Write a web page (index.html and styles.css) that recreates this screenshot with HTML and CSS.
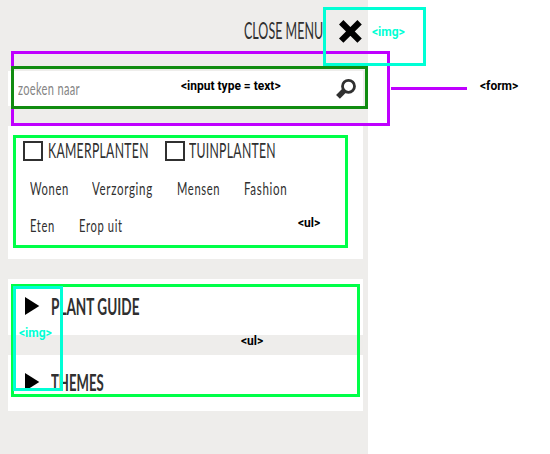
FILE: index.html
```html
<!DOCTYPE html>
<html lang="nl">
<head>
<meta charset="utf-8">
<title>Menu</title>
<link rel="stylesheet" href="styles.css">
</head>
<body>
<main class="menu">
  <header class="close"><span class="text close-text">CLOSE MENU</span>
    <svg class="cross" width="24" height="24" viewBox="0 0 24 24"><path d="M3.2 3.2 21.6 21.6M21.6 3.2 3.2 21.6" stroke="#000" stroke-width="6.2"/></svg>
  </header>
  <form class="search"><span class="text placeholder">zoeken naar</span>
    <svg class="lens" width="22" height="22" viewBox="0 0 22 22"><circle cx="12.5" cy="7.3" r="6" fill="none" stroke="#303030" stroke-width="2.8"/><path d="M8.4 11.4 2 17.8" stroke="#303030" stroke-width="5.4"/></svg>
  </form>
  <section class="card topics">
    <div class="checks">
      <i class="box"></i><span class="text check kamer">KAMERPLANTEN</span>
      <i class="box"></i><span class="text check tuin">TUINPLANTEN</span>
    </div>
    <ul class="links">
      <li class="text wonen">Wonen</li><li class="text verzorging">Verzorging</li><li class="text mensen">Mensen</li><li class="text fashion">Fashion</li>
    </ul>
    <ul class="links last">
      <li class="text eten">Eten</li><li class="text erop">Erop uit</li>
    </ul>
  </section>
  <section class="card entry">
    <svg class="arrow" width="15" height="19" viewBox="0 0 15 19"><path d="M0 0 14.3 9 0 18Z"/></svg><span class="text title guide">PLANT GUIDE</span>
  </section>
  <section class="card entry">
    <svg class="arrow" width="15" height="19" viewBox="0 0 15 19"><path d="M0 0 14.3 9 0 18Z"/></svg><span class="text title themes">THEMES</span>
  </section>
</main>
<div class="mark form-mark"></div>
<div class="mark input-mark"></div>
<div class="mark topics-mark"></div>
<div class="mark entries-mark"></div>
<div class="mark cross-mark"></div>
<div class="mark arrows-mark"></div>
<div class="connector"></div>
<span class="note cross-note">&lt;img&gt;</span>
<span class="note input-note">&lt;input type = text&gt;</span>
<span class="note form-note">&lt;form&gt;</span>
<span class="note topics-note">&lt;ul&gt;</span>
<span class="note arrows-note">&lt;img&gt;</span>
<span class="note entries-note">&lt;ul&gt;</span>
</body>
</html>
```
FILE: styles.css
```css
* { box-sizing: border-box; }
body { margin: 0; width: 550px; height: 454px; overflow: hidden; position: relative; background: #fff; }
svg { display: block; flex: none; overflow: visible; }
.menu { width: 368px; height: 454px; padding: 0 5px 0 8px; background: #eeedeb; color: #303030; font-family: Lato, sans-serif; }
.text { flex: none; white-space: nowrap; transform-origin: 0 50%; }

.close { display: flex; height: 71px; padding: 18px 0 0 236px; }
.close-text { width: 94px; font-size: 22.5px; line-height: 26px; transform: scaleX(.556); }
.cross { margin-top: 1px; }

.search { display: flex; height: 35px; margin: 0 0 20px; padding: 8px 0 0 10px; background: #fff; }
.placeholder { width: 318px; font-size: 17px; line-height: 20px; color: #858585; letter-spacing: .5px; transform: scaleX(.65); }

.card { background: #fff; }
.topics { height: 133px; margin-bottom: 20px; padding: 15px 0 0 15px; }
.checks { display: flex; height: 20px; }
.box { flex: none; width: 20px; height: 20px; border: 2px solid #303030; }
.check { font-size: 21px; line-height: 18px; margin-left: 5px; letter-spacing: .5px; transform: scaleX(.582); }
.kamer { width: 117px; }
.tuin { margin-left: 4px; }
.links { display: flex; height: 20px; margin: 18px 0 0; padding: 0 0 0 7px; list-style: none; font-size: 17.5px; line-height: 20px; letter-spacing: 1px; }
.last { margin-top: 17px; }
.links .text { transform: scaleX(.64); }
.links .verzorging, .links .fashion { transform: scaleX(.66); }
.wonen { width: 62px; }
.verzorging { width: 85px; }
.mensen { width: 67px; }
.eten { width: 49px; }

.entry { display: flex; height: 56px; padding: 18px 0 0 17px; }
.entry + .entry { margin-top: 20px; }
.title { margin-left: 11px; font-size: 23px; line-height: 19px; font-weight: 700; transform: scaleX(.59); }
.themes { transform: scaleX(.57); }

.mark { position: absolute; border: 3px solid; }
.form-mark { left: 11px; top: 51px; width: 379px; height: 75px; border-color: #bf00ff; }
.input-mark { left: 11px; top: 66px; width: 357px; height: 43px; border-color: #108c10; }
.topics-mark { left: 13px; top: 135px; width: 335px; height: 113px; border-color: #00ff48; }
.entries-mark { left: 11px; top: 284px; width: 349px; height: 113px; border-color: #00ff48; }
.cross-mark { left: 323px; top: 7px; width: 103px; height: 59px; border-color: #00ffd5; }
.arrows-mark { left: 13px; top: 286px; width: 50px; height: 105px; border-color: #00ffd5; }
.connector { position: absolute; left: 391px; top: 87px; width: 76px; height: 3px; background: #bf00ff; }
.note { position: absolute; font: 700 12px/14px Roboto, sans-serif; white-space: nowrap; color: #000; }
.cross-note { left: 372px; top: 25px; color: #00ffd5; }
.input-note { left: 181px; top: 79px; }
.form-note { left: 480px; top: 79px; }
.topics-note { left: 298px; top: 216px; }
.arrows-note { left: 19px; top: 326px; color: #00ffd5; }
.entries-note { left: 241px; top: 334px; }
```
